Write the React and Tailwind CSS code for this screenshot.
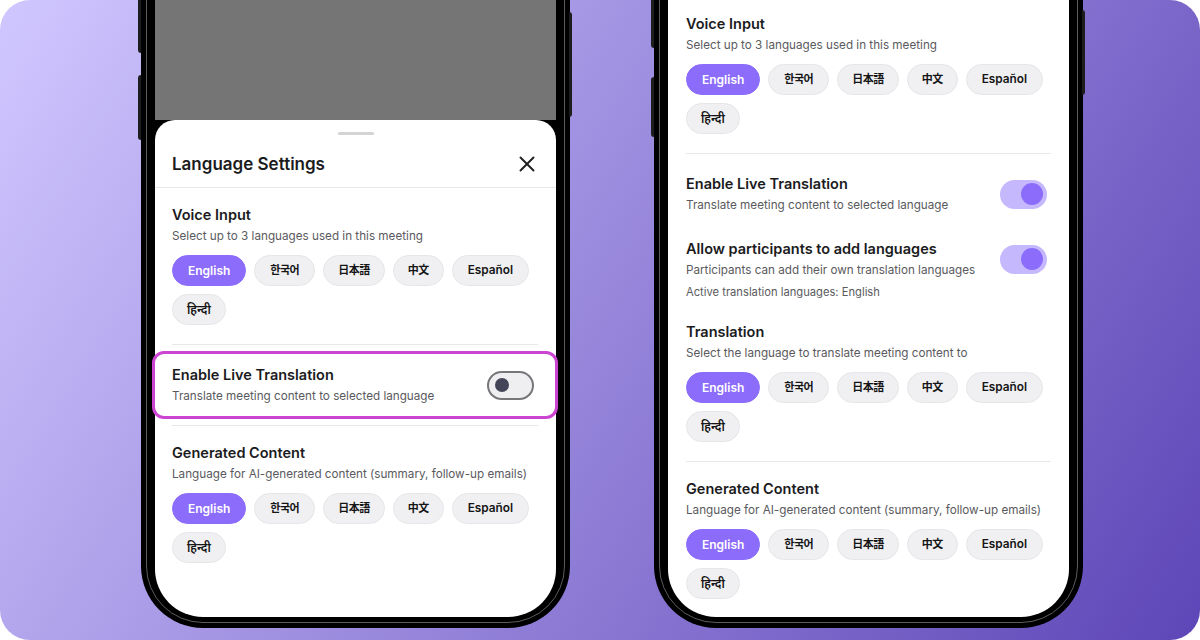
import { X } from 'lucide-react';

const languages = [
    { label: 'English', size: 'text-[12px] px-[15px]' },
    { label: '한국어', size: 'text-[11px] font-bold tracking-[-0.5px] px-[15px]' },
    { label: '日本語', size: 'text-[11px] font-bold tracking-[-0.5px] px-[14px]' },
    { label: '中文', size: 'text-[11px] font-bold tracking-[-0.5px] px-[14px]' },
    { label: 'Español', size: 'text-[11.8px] px-[15px]' },
    { label: 'हिन्दी', size: 'text-[12px] px-[14px]' },
];

const Chip = ({ label, size, selected }) => (
    <span
        className={`h-[31px] flex items-center rounded-full border font-semibold ${size} ${
            selected ? 'bg-[#8b6cfb] border-[#8b6cfb] text-white' : 'bg-[#f0f0f2] border-[#e6e6e9] text-[#151515]'
        }`}
    >
        {label}
    </span>
);

const ChipGroup = () => (
    <div className="mt-[10px] flex flex-wrap gap-2">
        {languages.map((lang) => (
            <Chip key={lang.label} label={lang.label} size={lang.size} selected={lang.label === 'English'} />
        ))}
    </div>
);

const Title = ({ children }) => (
    <div className="text-[14.5px] leading-[20px] font-semibold text-[#1b1b1d]">{children}</div>
);

const Desc = ({ children }) => (
    <div className="mt-[2px] text-[11.7px] leading-[18px] text-[#5a5a5e]">{children}</div>
);

const Divider = () => <div className="h-px bg-[#e8e8eb]" />;

// section with a title, description and the language chips
const ChipSection = ({ title, desc, top = 'pt-[17px]', bottom = 'pb-[19px]' }) => (
    <div className={`${top} ${bottom}`}>
        <Title>{title}</Title>
        <Desc>{desc}</Desc>
        <ChipGroup />
    </div>
);

const Toggle = ({ on }) =>
    on ? (
        <div className="mr-1 w-[47px] h-[29px] shrink-0 rounded-full bg-[#c5b8fd] flex items-center justify-end pr-[4px]">
            <div className="w-[22px] h-[22px] rounded-full bg-[#8b6cfb]" />
        </div>
    ) : (
        <div className="mr-1 w-[47px] h-[29px] shrink-0 rounded-full border-2 border-[#77777b] bg-[#efeff1] flex items-center pl-[6px]">
            <div className="w-[14px] h-[14px] rounded-full bg-[#45455a]" />
        </div>
    );

const ToggleRow = ({ title, desc, on }) => (
    <div className="flex items-center justify-between">
        <div>
            <Title>{title}</Title>
            <Desc>{desc}</Desc>
        </div>
        <Toggle on={on} />
    </div>
);

const Phone = ({ children, buttons }) => (
    <div className="relative w-[429px] h-[740px] shrink-0 rounded-[62px] bg-black p-[5px]">
        {buttons}
        <div className="h-full rounded-[57px] border border-[#5c5c5c] bg-black px-[8px] pb-[5px]">
            {children}
        </div>
    </div>
);

const LeftPhone = () => (
    <Phone
        buttons={
            <>
                <div className="absolute -left-[3px] top-[95px] w-[3px] h-[70px] rounded-l bg-[#1d1d1d]" />
                <div className="absolute -left-[3px] top-[187px] w-[3px] h-[65px] rounded-l bg-[#1d1d1d]" />
                <div className="absolute -right-[2px] top-[124px] w-[3px] h-[105px] rounded-r bg-[#1d1d1d]" />
            </>
        }
    >
        <div className="h-full flex flex-col">
            <div className="flex-1 bg-[#757575]" />
            <div className="bg-white rounded-t-[20px] rounded-b-[48px] pt-[12px] pb-[35px]">
                <div className="mx-auto w-[36px] h-[3px] rounded-full bg-[#d4d4d6]" />
                <div className="flex items-center justify-between pl-[17px] pr-[16px] pt-[15px] pb-[9px]">
                    <div className="text-[17px] leading-[28px] font-semibold text-[#1b1b1d]">Language Settings</div>
                    <X size={26} strokeWidth={1.8} className="text-[#222]" />
                </div>
                <Divider />
                <div className="pl-[17px] pr-[18px]">
                    <ChipSection title="Voice Input" desc="Select up to 3 languages used in this meeting" />
                    <Divider />
                    <div className="relative pt-[20px] pb-[20px]">
                        <ToggleRow
                            title="Enable Live Translation"
                            desc="Translate meeting content to selected language"
                            on={false}
                        />
                        {/* highlight around the toggle row */}
                        <div className="absolute -left-[20px] -right-[20px] top-[6px] bottom-[6px] rounded-[12px] border-[3px] border-[#cb44d2]" />
                    </div>
                    <Divider />
                    <ChipSection
                        title="Generated Content"
                        desc="Language for AI-generated content (summary, follow-up emails)"
                    />
                </div>
            </div>
        </div>
    </Phone>
);

const RightPhone = () => (
    <Phone
        buttons={
            <>
                <div className="absolute -left-[3px] top-[60px] w-[3px] h-[100px] rounded-l bg-[#1d1d1d]" />
                <div className="absolute -left-[3px] top-[189px] w-[3px] h-[60px] rounded-l bg-[#1d1d1d]" />
                <div className="absolute -right-[2px] top-[122px] w-[3px] h-[85px] rounded-r bg-[#1d1d1d]" />
            </>
        }
    >
        <div className="h-full flex flex-col justify-end overflow-hidden bg-white rounded-b-[48px] px-[18px]">
            <ChipSection title="Voice Input" desc="Select up to 3 languages used in this meeting" />
            <Divider />
            <div className="pt-[20px]">
                <ToggleRow
                    title="Enable Live Translation"
                    desc="Translate meeting content to selected language"
                    on
                />
                <div className="mt-[25px]">
                    <ToggleRow
                        title="Allow participants to add languages"
                        desc="Participants can add their own translation languages"
                        on
                    />
                </div>
                <div className="mt-[4px] text-[11.2px] leading-[18px] text-[#5a5a5e]">
                    Active translation languages: English
                </div>
            </div>
            <ChipSection
                title="Translation"
                desc="Select the language to translate meeting content to"
                top="pt-[21px]"
            />
            <Divider />
            <ChipSection
                title="Generated Content"
                desc="Language for AI-generated content (summary, follow-up emails)"
                bottom="pb-[18px]"
            />
        </div>
    </Phone>
);

const App = () => {
    return (
        <div className="w-[1200px] h-[640px] overflow-hidden bg-white font-[Inter,'Noto_Sans_CJK_KR','Noto_Sans_CJK_JP','Noto_Sans_CJK_SC','Noto_Sans',sans-serif]">
            <div className="h-full overflow-hidden rounded-[30px] bg-[linear-gradient(122deg,#d1c7ff_0%,#5d46b7_100%)] flex items-end gap-[84px] pl-[141px] pb-[12px]">
                <LeftPhone />
                <RightPhone />
            </div>
        </div>
    );
};

export default App;
